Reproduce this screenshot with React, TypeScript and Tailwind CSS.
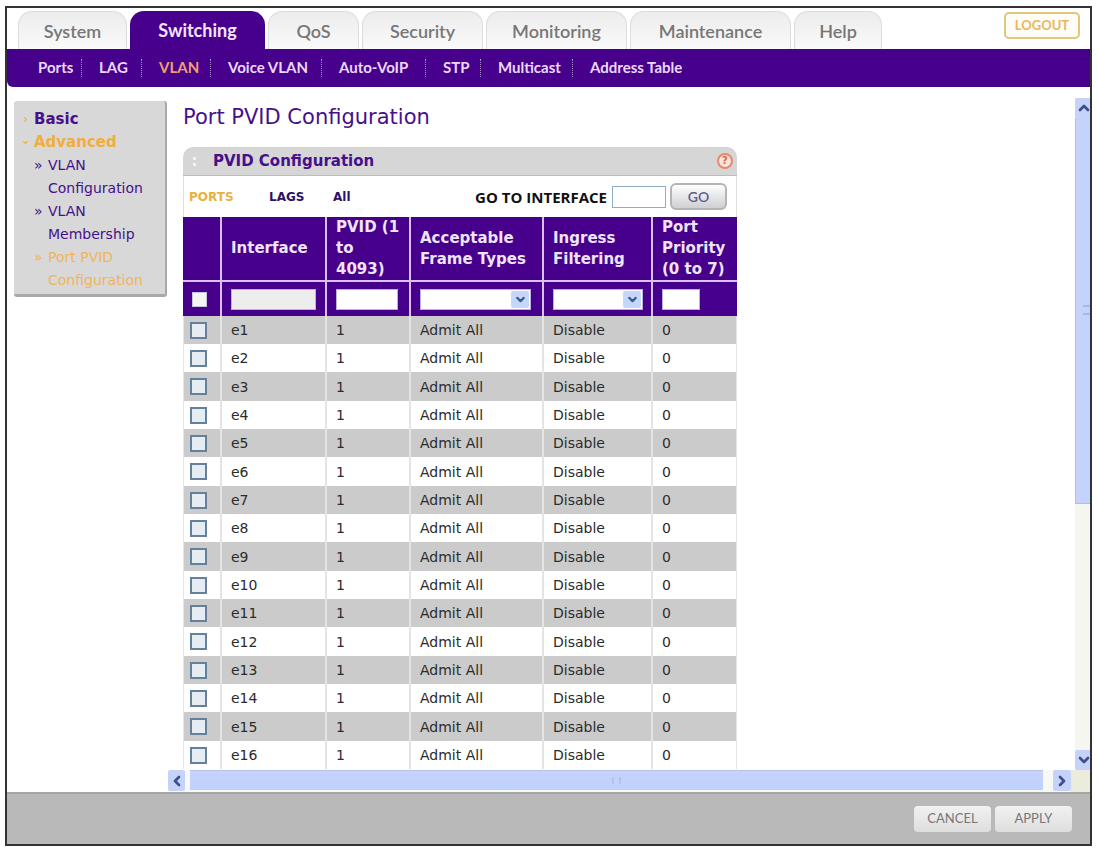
import { useState } from 'react';
import { ChevronDown, ChevronLeft, ChevronRight, ChevronUp } from 'lucide-react';
import { clsx } from 'clsx';

const tabs = [
  { label: 'System', width: 'w-[109px]' },
  { label: 'Switching', width: 'w-[135px]' },
  { label: 'QoS', width: 'w-[91px]' },
  { label: 'Security', width: 'w-[121px]' },
  { label: 'Monitoring', width: 'w-[141px]' },
  { label: 'Maintenance', width: 'w-[161px]' },
  { label: 'Help', width: 'w-[88px]' },
];

const subTabs = [
  { label: 'Ports', width: 'w-[61px]' },
  { label: 'LAG', width: 'w-[60px]' },
  { label: 'VLAN', width: 'w-[69px]' },
  { label: 'Voice VLAN', width: 'w-[111px]' },
  { label: 'Auto-VoIP', width: 'w-[104px]' },
  { label: 'STP', width: 'w-[55px]' },
  { label: 'Multicast', width: 'w-[92px]' },
  { label: 'Address Table', width: 'w-[120px]' },
];

const vlanPages = ['VLAN Configuration', 'VLAN Membership', 'Port PVID Configuration'];

const ports = Array.from({ length: 16 }, (_, i) => ({
  name: `e${i + 1}`,
  pvid: 1,
  frames: 'Admit All',
  filtering: 'Disable',
  priority: 0,
}));

function Header() {
  return (
    <header>
      <div className="flex items-end justify-between pl-[11px] pr-[10px] pt-[3px]">
        <nav aria-label="Main" className="flex gap-[3px] font-['Lato'] text-[18px] font-semibold">
          {tabs.map((tab) => (
            <a
              key={tab.label}
              href="#"
              className={clsx(
                'flex h-[38px] items-center justify-center rounded-t-[14px] pt-px',
                tab.width,
                tab.label === 'Switching'
                  ? 'bg-[#46008c] font-bold text-[#f3e6ff]'
                  : 'border-x border-t border-[#dcdcdc] bg-linear-to-b from-[#ececec] to-[#fafafa] text-[#777777]',
              )}
            >
              {tab.label}
            </a>
          ))}
        </nav>
        <button
          type="button"
          className="mb-[10px] h-[27px] w-[76px] rounded-[5px] border-2 border-[#e2c778] bg-[#fffdf5] font-['Lato'] text-[13px] font-bold text-[#e8b75c]"
        >
          LOGOUT
        </button>
      </div>
      <nav
        aria-label="Switching"
        className="flex h-[38px] items-center rounded-bl-md bg-[#46008c] pl-[14px] font-['Lato'] text-[15px] font-bold text-[#ead9fb]"
      >
        {subTabs.map((tab) => (
          <a
            key={tab.label}
            href="#"
            className={clsx(
              'h-[18px] border-r border-dotted border-[#a98bd0] pl-[17px] leading-[16px] whitespace-nowrap last:border-r-0',
              tab.width,
              tab.label === 'VLAN' && 'text-[#f0a070]',
            )}
          >
            {tab.label}
          </a>
        ))}
      </nav>
    </header>
  );
}

function Sidebar() {
  return (
    <aside className="w-[161px] shrink-0 pl-[7px] pt-[14px]">
      <div className="w-[153px] rounded-[3px] border-r-2 border-b-[3px] border-[#a9a9a9] bg-[#d8d8d8] pt-[7px] pb-[2px] text-[14px] leading-[23px] text-[#46108c]">
        <a href="#" className="flex items-center gap-[5px] pl-2 text-[15px] font-bold">
          <ChevronRight className="size-[7px] text-[#efb04c]" strokeWidth={4} />
          Basic
        </a>
        <a href="#" className="flex items-center gap-[5px] pl-2 text-[15px] font-bold text-[#f2ad3c]">
          <ChevronDown className="size-[7px]" strokeWidth={4} />
          Advanced
        </a>
        {vlanPages.map((page) => (
          <a
            key={page}
            href="#"
            className={clsx('flex pl-5', page.startsWith('Port') && 'text-[#f2b45a]')}
          >
            <span className="w-[14px]">»</span>
            <span className="w-[105px]">{page}</span>
          </a>
        ))}
      </div>
    </aside>
  );
}

function DropDown({ label, width }: { label: string; width: string }) {
  return (
    <div className={clsx('relative h-[21px]', width)}>
      <select aria-label={label} className="h-full w-full appearance-none border border-[#b9b0dd] bg-white" />
      <span className="pointer-events-none absolute top-[2px] right-[2px] flex h-[17px] w-[18px] items-center justify-center rounded-xs bg-[#c6d8fa] text-[#3f5a8c]">
        <ChevronDown className="size-[13px]" strokeWidth={4} />
      </span>
    </div>
  );
}

function PortTable() {
  const [checked, setChecked] = useState<string[]>([]);
  const all = checked.length === ports.length;

  const toggle = (name: string) =>
    setChecked(checked.includes(name) ? checked.filter((n) => n !== name) : [...checked, name]);

  return (
    <table className="w-full table-fixed border-separate border-spacing-0 text-left text-[14px] leading-5 text-[#2b2b2b]">
      <colgroup>
        <col className="w-[39px]" />
        <col className="w-[105px]" />
        <col className="w-[84px]" />
        <col className="w-[133px]" />
        <col className="w-[109px]" />
        <col />
      </colgroup>
      <thead className="bg-[#46008c] text-[#efe4fa] [&_td]:border-r-2 [&_td]:border-[#d9c2ef] [&_td:last-child]:border-r-0 [&_th]:border-r-2 [&_th]:border-b-2 [&_th]:border-[#d9c2ef] [&_th]:pl-[9px] [&_th:last-child]:border-r-0">
        <tr className="h-[65px] text-[15px] leading-[21px]">
          <th />
          <th>Interface</th>
          <th className="pr-2">PVID (1 to 4093)</th>
          <th>Acceptable Frame Types</th>
          <th>Ingress Filtering</th>
          <th>Port Priority (0 to 7)</th>
        </tr>
        <tr className="h-[34px] [&>td]:pl-[9px]">
          <td>
            <input
              type="checkbox"
              aria-label="Select all ports"
              checked={all}
              onChange={() => setChecked(all ? [] : ports.map((p) => p.name))}
              className="block size-[15px] appearance-none border border-[#c9c2e0] bg-[#f4f6f2] checked:bg-[#9cb6dc]"
            />
          </td>
          <td>
            <input aria-label="Interface" disabled className="block h-[21px] w-[85px] border border-[#b9b0dd] bg-[#ededed]" />
          </td>
          <td>
            <input aria-label="PVID" className="block h-[21px] w-[62px] border border-[#b9b0dd] bg-white text-black" />
          </td>
          <td>
            <DropDown label="Acceptable frame types" width="w-[111px]" />
          </td>
          <td>
            <DropDown label="Ingress filtering" width="w-[90px]" />
          </td>
          <td>
            <input aria-label="Port priority" className="block h-[21px] w-[38px] border border-[#b9b0dd] bg-white text-black" />
          </td>
        </tr>
      </thead>
      <tbody className="[&_td]:border-r-2 [&_td]:border-[#e4e4e4] [&_td]:pl-[9px] [&_td:first-child]:border-l [&_td:first-child]:pl-[6px] [&_td:last-child]:border-r">
        {ports.map((port) => (
          <tr key={port.name} className="h-[28px] odd:bg-[#cbcbcb] nth-[3n]:h-[29px]">
            <td>
              <input
                type="checkbox"
                aria-label={`Select ${port.name}`}
                checked={checked.includes(port.name)}
                onChange={() => toggle(port.name)}
                className="block size-[17px] appearance-none border-2 border-[#64809a] bg-[#e6edf2] checked:bg-[#9cb6dc]"
              />
            </td>
            <td>{port.name}</td>
            <td>{port.pvid}</td>
            <td>{port.frames}</td>
            <td>{port.filtering}</td>
            <td>{port.priority}</td>
          </tr>
        ))}
      </tbody>
    </table>
  );
}

function PvidPanel() {
  return (
    <section className="mt-[15px] w-[554px]">
      <div className="flex h-[29px] items-center rounded-t-[10px] border-b border-[#bdbdbd] bg-[#d6d6d6] pr-1 pl-[10px]">
        <span className="flex w-5 flex-col gap-[3px]">
          <span className="size-[3px] bg-[#f4f4f4]" />
          <span className="size-[3px] bg-[#f4f4f4]" />
        </span>
        <h2 className="flex-1 text-[15px] font-bold text-[#46108c]">PVID Configuration</h2>
        <button
          type="button"
          aria-label="Help"
          className="flex size-4 items-center justify-center rounded-full border-2 border-[#e58a70] bg-[#fbe3da] text-[10px] leading-none font-bold text-[#d9664a]"
        >
          ?
        </button>
      </div>
      <div className="flex h-[41px] items-center border-x border-[#e0e0e0] pr-[9px] pl-[5px] text-[12px] font-bold text-[#2d1263]">
        <a href="#" className="w-[80px] text-[#e9b13d]">PORTS</a>
        <a href="#" className="w-[64px]">LAGS</a>
        <a href="#">All</a>
        <label htmlFor="goto" className="ml-auto font-['Open_Sans'] text-[15px] leading-5 text-[#111111]">
          GO TO INTERFACE
        </label>
        <input id="goto" className="ml-[5px] h-[22px] w-[54px] border border-[#8fb0c4] bg-white" />
        <button
          type="button"
          className="ml-1 h-[27px] w-[57px] rounded-md border-2 border-[#b4b4b4] bg-linear-to-b from-white to-[#cfcfd4] font-['Lato'] text-[14px] font-semibold text-[#5d5d8c]"
        >
          GO
        </button>
      </div>
      <PortTable />
    </section>
  );
}

const arrow = 'flex shrink-0 items-center justify-center rounded-xs bg-[#c5d3f8] text-[#3d4f8f]';

function VerticalScroll() {
  return (
    <div className="mt-[11px] flex w-[15px] shrink-0 flex-col overflow-hidden bg-[#f6f6f0]">
      <button type="button" aria-label="Scroll up" className={clsx(arrow, 'h-[20px] w-[18px]')}>
        <ChevronUp className="size-4" strokeWidth={4} />
      </button>
      <div className="flex-1">
        <div className="flex h-[61%] items-center justify-end border-l border-b border-[#a9bdf0] bg-linear-to-r from-[#c9d2fb] to-[#bfd4fb]">
          <span className="h-[10px] w-[7px] border-y-2 border-[#a5bae6]" />
        </div>
      </div>
      <button type="button" aria-label="Scroll down" className={clsx(arrow, 'h-[20px] w-[18px]')}>
        <ChevronDown className="size-4" strokeWidth={4} />
      </button>
    </div>
  );
}

function HorizontalScroll() {
  return (
    <div className="flex h-[22px] shrink-0 bg-[#f8f8f4]">
      <button type="button" aria-label="Scroll left" className={clsx(arrow, 'h-[21px] w-[17px]')}>
        <ChevronLeft className="size-4" strokeWidth={4} />
      </button>
      <div className="mr-[10px] ml-[5px] flex h-[20px] flex-1 items-center justify-center border-t border-[#b5c2ea] bg-linear-to-b from-[#c9d2fb] to-[#bcd3fb]">
        <span className="h-[7px] w-[9px] border-x-2 border-[#b3c4ee]" />
      </div>
      <button type="button" aria-label="Scroll right" className={clsx(arrow, 'h-[21px] w-[18px]')}>
        <ChevronRight className="size-4" strokeWidth={4} />
      </button>
      <div className="w-[19px] bg-[#ececdc]" />
    </div>
  );
}

export default function App() {
  return (
    <div className="h-screen bg-white pt-[6px] pr-[6px] pb-[2px] pl-[5px] font-['DejaVu_Sans',sans-serif]">
      <div className="flex h-full flex-col overflow-hidden border-2 border-[#333333]">
        <Header />
        <div className="flex min-h-0 flex-1">
          <Sidebar />
          <div className="flex min-w-0 flex-1 flex-col">
            <div className="flex min-h-0 flex-1">
              <main className="min-w-0 flex-1 overflow-hidden pt-[15px] pl-[15px]">
                <h1 className="text-[21px] leading-[30px] text-[#46108c]">Port PVID Configuration</h1>
                <PvidPanel />
              </main>
              <VerticalScroll />
            </div>
            <HorizontalScroll />
          </div>
        </div>
        <footer className="flex h-[52px] shrink-0 items-center justify-end gap-1 border-t-2 border-[#a6a6a6] bg-[#b9b9b9] pr-[18px]">
          {['CANCEL', 'APPLY'].map((label) => (
            <button
              key={label}
              type="button"
              className="h-[26px] w-[77px] rounded-sm bg-linear-to-b from-[#f1f1f1] to-[#dedede] font-['Lato'] text-[13px] text-[#777777]"
            >
              {label}
            </button>
          ))}
        </footer>
      </div>
    </div>
  );
}
